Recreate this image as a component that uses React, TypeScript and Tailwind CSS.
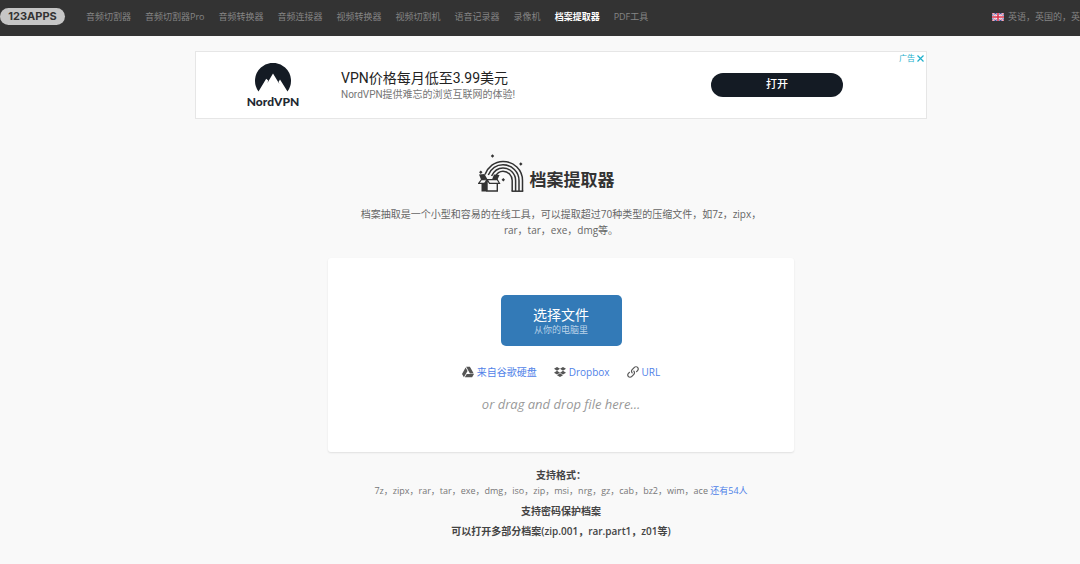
import { FaDropbox, FaGoogleDrive } from "react-icons/fa";
import { ImLink } from "react-icons/im";

const navItems = [
  "音频切割器",
  "音频切割器Pro",
  "音频转换器",
  "音频连接器",
  "视频转换器",
  "视频切割机",
  "语音记录器",
  "录像机",
  "档案提取器",
  "PDF工具"
];

const activeItem = "档案提取器";

const sources = [
  { label: "来自谷歌硬盘", Icon: FaGoogleDrive },
  { label: "Dropbox", Icon: FaDropbox },
  { label: "URL", Icon: ImLink }
];

function FlagIcon() {
  return (
    <svg className="h-2 w-3 shrink-0" viewBox="0 0 60 40" preserveAspectRatio="none" aria-hidden="true">
      <rect width="60" height="40" fill="#3f4fa0" />
      <path d="M0 0L60 40M60 0L0 40" stroke="#fff" strokeWidth="9" />
      <path d="M0 0L60 40M60 0L0 40" stroke="#d8405a" strokeWidth="4" />
      <path d="M30 0V40M0 20H60" stroke="#fff" strokeWidth="14" />
      <path d="M30 0V40M0 20H60" stroke="#d8304a" strokeWidth="8" />
    </svg>
  );
}

function NordIcon() {
  return (
    <svg className="h-[30px] w-[38px]" viewBox="0 0 38 30" aria-hidden="true">
      <path
        d="M4.500 28.500A18 18 0 1 1 33.500 28.500L26 16.500L24.600 18.800L25.400 21L19 10.500L13.400 20L14.200 17.600L12.200 15.800Z"
        fill="#141b24"
      />
    </svg>
  );
}

function RainbowBoxIcon() {
  return (
    <svg className="h-[38px] w-[46px]" viewBox="0 0 46 38" fill="none" aria-hidden="true">
      <g stroke="#333" strokeWidth="1.500">
        <path d="M7 20.500C10 13 16.500 7.500 25 7.500C36 7.500 44.500 16 44.500 26.500V37" />
        <path d="M10.300 21C13 15 18 10.800 25 10.800C34 10.800 41 18 41 26.500V37" />
        <path d="M13.600 22C16 17 19.500 14 25 14C32 14 37.600 19.800 37.600 26.500V37" />
        <path d="M17 23C18.800 19.500 21 17.300 25 17.300C30.200 17.300 34.200 21.500 34.200 26.500V37" />
        <path d="M33.500 37.200H45.300" />
      </g>
      <path d="M1 20.500L6.500 20L9.500 25.500L3 25.500Z" fill="#333" />
      <path d="M14 25.500L16 20.500L21.500 21L19.500 25.500Z" fill="#333" />
      <path d="M3.500 26H9V37.500H3.500Z" fill="#333" />
      <path d="M9 27H19.300V37H9Z" fill="#f9f9f9" stroke="#333" strokeWidth="1.400" />
      <path d="M3.500 25.500L0.700 29.300H6.500L9 26Z" fill="#f9f9f9" stroke="#333" strokeWidth="1.200" />
      <path d="M9 25.700H19.300L21.500 29.300H11.500Z" fill="#f9f9f9" stroke="#333" strokeWidth="1.200" />
      <g fill="#333">
        <path d="M14.500 0.200L16.200 2L14.500 3.800L12.800 2Z" />
        <path d="M42.800 8.300L44.500 10L42.800 11.700L41.100 10Z" />
        <path d="M2.800 16.500L4.500 18.200L2.800 19.900L1.100 18.200Z" />
        <path d="M25.300 24L27 25.700L25.300 27.400L23.600 25.700Z" />
      </g>
    </svg>
  );
}

function Header() {
  return (
    <header className="flex h-9 items-center overflow-hidden bg-[#333] pb-[3px] text-[9px] whitespace-nowrap text-[#858585]">
      <a
        className="flex h-[17px] w-[65px] shrink-0 items-center justify-center rounded-full bg-[#c6c6c6] font-[Inter,sans-serif] text-[11px] leading-none font-bold text-[#333]"
        href="#"
      >
        123APPS
      </a>
      <nav className="ml-[21px] flex gap-[14px]">
        {navItems.map((item) => (
          <a className={item === activeItem ? "font-bold text-white" : ""} href="#" key={item}>
            {item}
          </a>
        ))}
      </nav>
      <button className="ml-auto flex w-[88px] shrink-0 items-center gap-1" type="button">
        <FlagIcon />
        <span>英语，英国的，英</span>
      </button>
    </header>
  );
}

function AdBanner() {
  return (
    <aside className="relative flex h-[68px] w-full max-w-[732px] items-center border border-[#e6e6e6] bg-white font-[Roboto,'Noto_Sans_CJK_SC',sans-serif]">
      <div className="ml-[50px] flex w-[54px] flex-col items-center">
        <NordIcon />
        <span className="mt-[3px] font-[Lato,sans-serif] text-xs leading-3 font-black text-[#222831]">NordVPN</span>
      </div>
      <div className="ml-[41px] pb-px text-left">
        <p className="text-[14px] leading-5 text-[#222]">VPN价格每月低至3.99美元</p>
        <p className="text-[10px] leading-[14px] text-[#757575]">NordVPN提供难忘的浏览互联网的体验!</p>
      </div>
      <button
        className="mr-[83px] ml-auto h-6 w-[132px] rounded-full bg-[#141b24] text-[11px] font-medium text-white"
        type="button"
      >
        打开
      </button>
      <div className="absolute top-px right-[2px] flex items-center gap-[2px] text-[#1fb0cc]">
        <a className="text-[8px] leading-[11px]" href="#">
          广告
        </a>
        <button aria-label="关闭" type="button">
          <svg className="h-[7px] w-[7px]" viewBox="0 0 7 7" aria-hidden="true">
            <path d="M0.500 0.500L6.500 6.500M6.500 0.500L0.500 6.500" stroke="currentColor" strokeWidth="1.200" />
          </svg>
        </button>
      </div>
    </aside>
  );
}

function UploadPanel() {
  return (
    <section className="mt-[20px] flex w-full max-w-[466px] flex-col items-center rounded-[3px] bg-white pt-[37px] pb-[38px] shadow-[0_1px_2px_rgba(0,0,0,0.1)]">
      <button className="flex h-[51px] w-[121px] flex-col items-center justify-center rounded-[5px] bg-[#337ab7] text-white" type="button">
        <span className="text-[14px] leading-[18px]">选择文件</span>
        <span className="text-[9px] leading-3 text-[#b9d2e8]">从你的电脑里</span>
      </button>
      <div className="mt-[18px] flex gap-[17px] text-[10px] leading-4 text-[#5082e8]">
        {sources.map(({ label, Icon }) => (
          <a className="flex items-center gap-[3px]" href="#" key={label}>
            <Icon className="h-3 w-3 text-[#555]" aria-hidden="true" />
            {label}
          </a>
        ))}
      </div>
      <p className="mt-[15px] text-[13px] leading-[19px] text-[#999] italic">or drag and drop file here...</p>
    </section>
  );
}

export default function App() {
  return (
    <div className="min-h-screen overflow-hidden bg-[#f9f9f9] font-['Open_Sans','Noto_Sans_CJK_SC',sans-serif] text-[#666]">
      <Header />
      <main className="flex flex-col items-center pt-[15px] pl-[42px] text-center">
        <AdBanner />
        <div className="mt-[35px] flex items-end gap-[6px] pr-[30px]">
          <RainbowBoxIcon />
          <h1 className="text-[17px] leading-6 font-bold text-[#333]">档案提取器</h1>
        </div>
        <p className="mt-[14px] max-w-[412px] text-[10px] leading-4">
          档案抽取是一个小型和容易的在线工具，可以提取超过70种类型的压缩文件，如7z，zipx，rar，tar，exe，dmg等。
        </p>
        <UploadPanel />
        <div className="mt-[15px] text-[10px] leading-4 font-semibold text-[#444]">
          <h2>支持格式：</h2>
          <p className="text-[9px] font-normal text-[#777]">
            7z，zipx，rar，tar，exe，dmg，iso，zip，msi，nrg，gz，cab，bz2，wim，ace{" "}
            <a className="text-[#5082e8]" href="#">
              还有54人
            </a>
          </p>
          <p className="mt-1">支持密码保护档案</p>
          <p className="mt-1">可以打开多部分档案(zip.001，rar.part1，z01等)</p>
        </div>
      </main>
    </div>
  );
}
